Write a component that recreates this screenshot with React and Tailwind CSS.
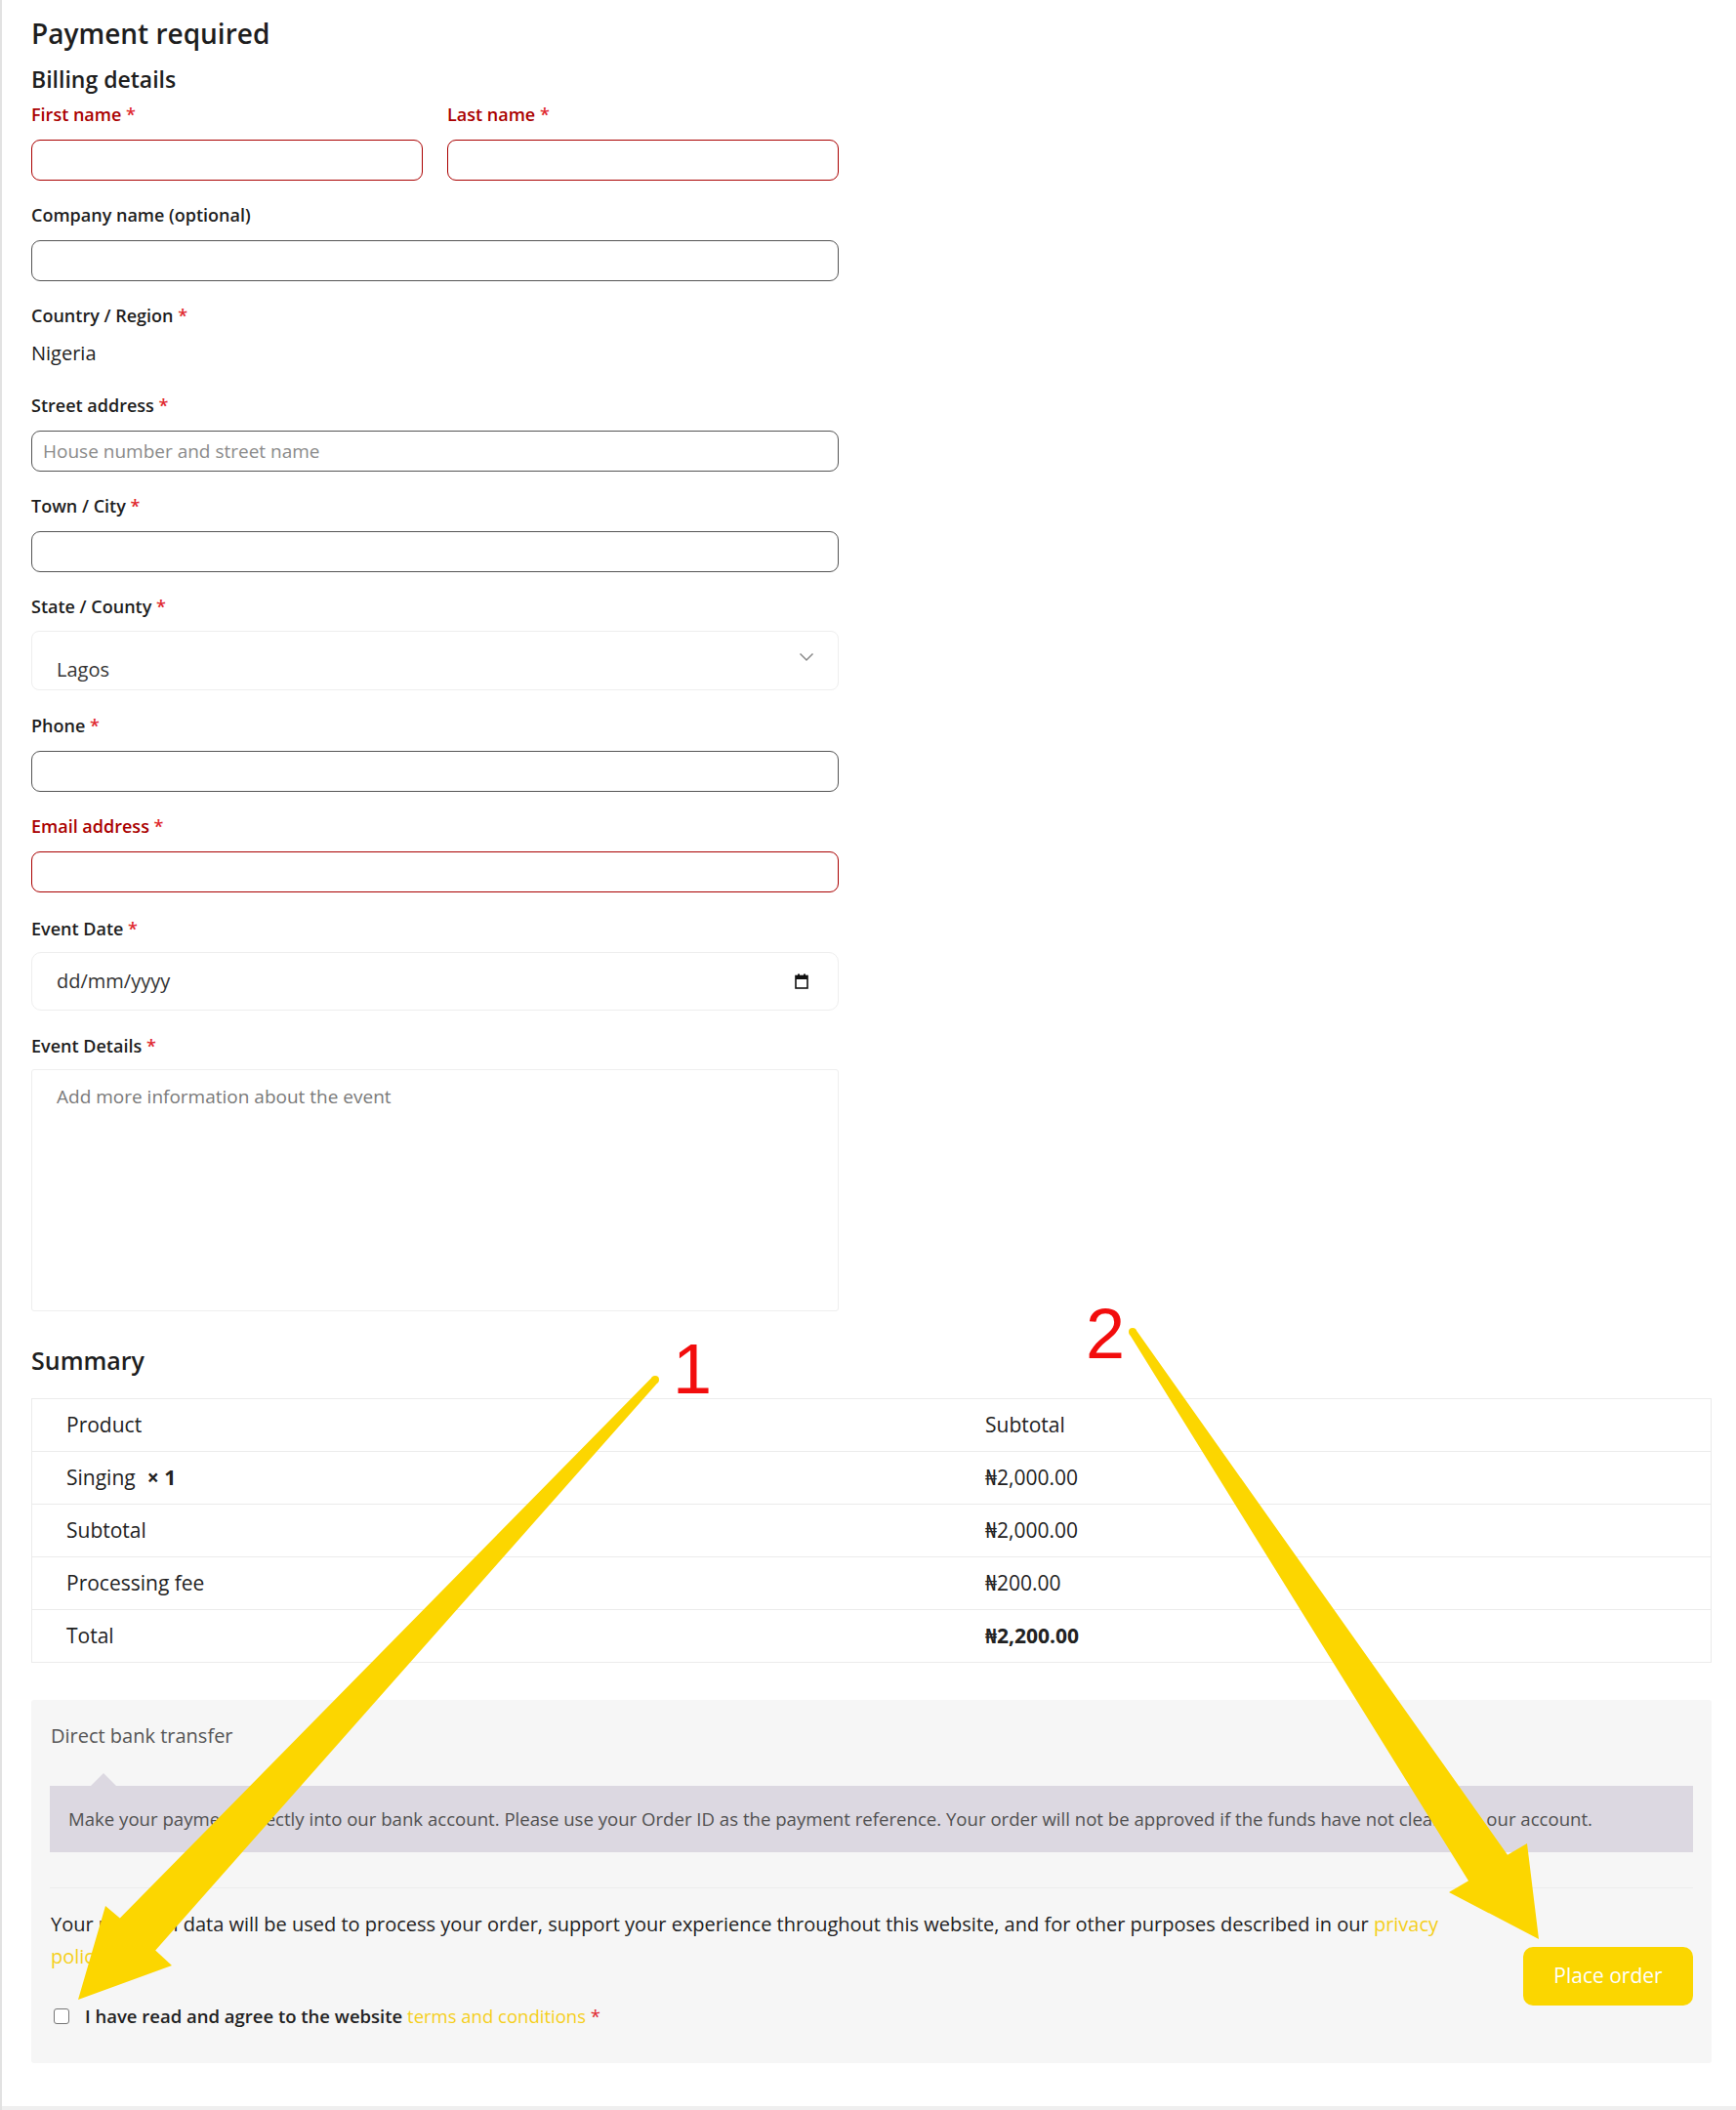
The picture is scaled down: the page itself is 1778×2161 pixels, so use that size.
import React from "react";

const baseLabel = "block text-[18px] leading-[24px] font-semibold";
const textInput = "block w-full h-[42px] rounded-[9px] border bg-white px-[11px] text-[19px] outline-none";

function Label({ children, invalid, className = "" }) {
  return (
    <label className={`${baseLabel} ${invalid ? "text-[#a00]" : "text-[#1e1e1e]"} ${className}`}>
      {children} <span className="text-[#e0282e]">*</span>
    </label>
  );
}

function TextField({ label, invalid, placeholder, className = "" }) {
  return (
    <div className={className}>
      <Label invalid={invalid}>{label}</Label>
      <input
        type="text"
        placeholder={placeholder}
        className={`${textInput} mt-[14px] placeholder:text-[#8a8a8a] ${invalid ? "border-[#a00]" : "border-[#555]"}`}
      />
    </div>
  );
}

function CalendarIcon() {
  return (
    <svg width="14" height="16" viewBox="0 0 14 16">
      <rect x="1" y="2.5" width="12" height="12.5" fill="none" stroke="#111" strokeWidth="1.6" />
      <rect x="1" y="2.5" width="12" height="3.5" fill="#111" />
      <rect x="3" y="0.5" width="2" height="3" fill="#111" />
      <rect x="9" y="0.5" width="2" height="3" fill="#111" />
    </svg>
  );
}

const rows = [
  { label: "Product", value: "Subtotal" },
  { label: "Singing", qty: true, value: "₦2,000.00" },
  { label: "Subtotal", value: "₦2,000.00" },
  { label: "Processing fee", value: "₦200.00" },
  { label: "Total", value: "₦2,200.00", bold: true },
];

function Arrows() {
  return (
    <svg className="absolute top-0 -left-[2px] pointer-events-none" width="1778" height="2161">
      <g fill="#fcd600">
        <polygon points="673.9,1415.7 159.2,1997.4 176,2013 80,2048 108,1952 122.8,1964.6 668.1,1410.3" />
        <circle cx="671" cy="1413" r="4" />
        <polygon points="1163.3,1361.8 1544,1899.7 1564,1888 1576,1986 1484,1938 1504,1926.3 1156.7,1366.2" />
        <circle cx="1160" cy="1364" r="4" />
      </g>
    </svg>
  );
}

export default function App() {
  return (
    <div className="relative flex min-h-[2161px] flex-col border-l-2 border-[#e2e2e2] bg-white font-['Open_Sans','Noto_Sans',sans-serif] text-[#1e1e1e]">
      <main className="flex-1 pl-[30px] pr-[25px] pt-[16px]">
        <h1 className="text-[28px] leading-[36px] font-semibold">Payment required</h1>
        <h2 className="mt-[14px] text-[23px] leading-[30px] font-semibold">Billing details</h2>

        {/* Billing form */}
        <div className="w-[827px]">
          <div className="mt-[9px] grid grid-cols-2 gap-x-[25px]">
            <TextField label="First name" invalid />
            <TextField label="Last name" invalid />
          </div>

          <div className="mt-[23px]">
            <label className={`${baseLabel} text-[#1e1e1e]`}>Company name (optional)</label>
            <input type="text" className={`${textInput} mt-[14px] border-[#555]`} />
          </div>

          <div className="mt-[23px]">
            <Label>Country / Region</Label>
            <div className="mt-[15px] text-[20px] leading-[24px] font-medium">Nigeria</div>
          </div>

          <TextField className="mt-[29px]" label="Street address" placeholder="House number and street name" />
          <TextField className="mt-[23px]" label="Town / City" />

          <div className="mt-[23px]">
            <Label>State / County</Label>
            <div className="relative mt-[13px] h-[61px] rounded-[8px] border border-[#eeeeee] pl-[25px] pt-[27px] text-[20px] leading-[24px] text-[#333]">
              Lagos
              <svg className="absolute right-[24px] top-[21px]" width="16" height="10" viewBox="0 0 16 10">
                <path d="M1.5 1.5 L8 8 L14.5 1.5" fill="none" stroke="#8a8a8a" strokeWidth="1.5" />
              </svg>
            </div>
          </div>

          <TextField className="mt-[24px]" label="Phone" />
          <TextField className="mt-[23px]" label="Email address" invalid />

          <div className="mt-[25px]">
            <Label>Event Date</Label>
            <div className="mt-[12px] flex h-[60px] items-center justify-between rounded-[10px] border border-[#eeeeee] pl-[25px] pr-[30px] text-[20px] text-[#333]">
              <span>dd/mm/yyyy</span>
              <CalendarIcon />
            </div>
          </div>

          <div className="mt-[24px]">
            <Label>Event Details</Label>
            <div className="mt-[12px] h-[248px] rounded-[3px] border border-[#eeeeee] pl-[25px] pt-[15px] text-[19px] leading-[24px] text-[#7a7a7a]">
              Add more information about the event
            </div>
          </div>
        </div>

        {/* Summary */}
        <h2 className="mt-[33px] text-[25px] leading-[34px] font-semibold">Summary</h2>
        <div className="mt-[22px] border border-[#ebebeb]">
          {rows.map((r, i) => (
            <div
              key={r.label}
              className={
                i < rows.length - 1
                  ? "grid h-[54px] grid-cols-[940px_1fr] items-center border-b border-[#ebebeb] text-[21px] text-[#222]"
                  : "grid h-[53px] grid-cols-[940px_1fr] items-center text-[21px] text-[#222]"
              }
            >
              <div className="pl-[35px]">
                {r.label}
                {r.qty && <strong className="ml-[12px] font-bold">×&nbsp;1</strong>}
              </div>
              <div className={r.bold ? "pl-[36px] font-bold" : "pl-[36px]"}>{r.value}</div>
            </div>
          ))}
        </div>

        {/* Payment */}
        <div className="mt-[38px] rounded-[3px] bg-[#f6f6f6] px-[19px] pt-[23px] pb-[34px]">
          <div className="pl-[1px] text-[20px] leading-[28px] text-[#555]">Direct bank transfer</div>
          <div className="relative mt-[37px] flex h-[68px] items-center bg-[#dcd8e1] px-[19px] text-[18.6px] text-[#515151]">
            <span className="absolute -top-[13px] left-[42px] h-0 w-0 border-x-[13px] border-b-[13px] border-x-transparent border-b-[#dcd8e1]" />
            Make your payment directly into our bank account. Please use your Order ID as the payment reference. Your order will not be approved if the funds have not cleared in our account.
          </div>

          <div className="mt-[36px] flex items-start justify-between border-t border-[#ededed] pt-[20px]">
            <div className="w-[1445px]">
              <p className="pl-[1px] text-[20px] leading-[33px] text-[#222]">
                Your personal data will be used to process your order, support your experience throughout this website, and for other purposes described in our{" "}
                <a className="text-[#f5cf1a]">privacy policy</a>.
              </p>
              <label className="mt-[31px] flex h-[28px] items-center">
                <span className="ml-[4px] h-[16px] w-[16px] shrink-0 rounded-[3px] border border-[#767676] bg-white" />
                <span className="ml-[16px] text-[18.5px] font-semibold text-[#222]">
                  I have read and agree to the website{" "}
                  <a className="font-normal text-[#f5cf1a]">terms and conditions</a>{" "}
                  <span className="font-normal text-[#e0282e]">*</span>
                </span>
              </label>
            </div>
            <button className="mt-[40px] h-[60px] w-[174px] shrink-0 rounded-[10px] bg-[#fbd600] text-[21px] text-white">
              Place order
            </button>
          </div>
        </div>
      </main>
      <div className="h-[4px] bg-[#efefef]" />

      {/* annotation overlay */}
      <Arrows />
      <div className="absolute left-[687px] top-[1366px] font-['Liberation_Sans',Arial,sans-serif] text-[72px] leading-[72px] text-[#f20d0d]">1</div>
      <div className="absolute left-[1110px] top-[1330px] font-['Liberation_Sans',Arial,sans-serif] text-[72px] leading-[72px] text-[#f20d0d]">2</div>
    </div>
  );
}
